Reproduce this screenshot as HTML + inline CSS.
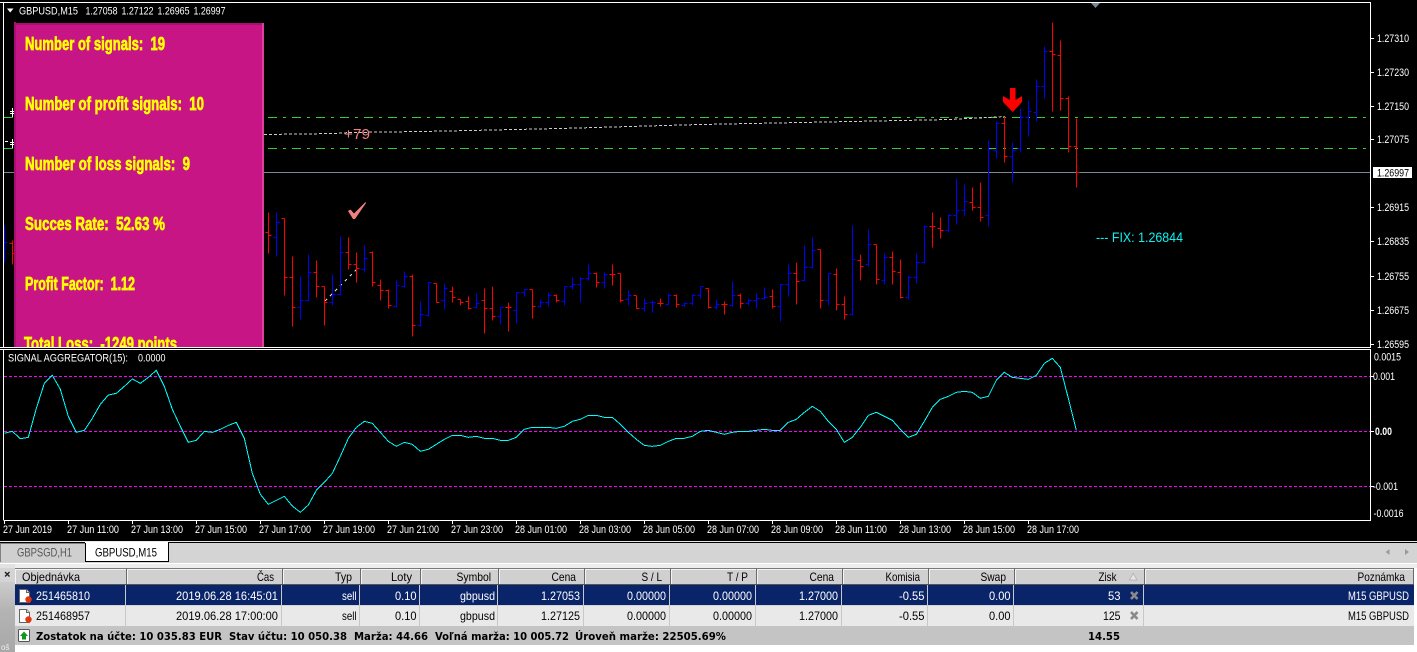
<!DOCTYPE html>
<html><head><meta charset="utf-8"><style>
html,body{margin:0;padding:0;background:#000;width:1417px;height:652px;overflow:hidden}
svg{display:block}
text{font-family:"Liberation Sans",sans-serif;white-space:pre}
.w text{fill:#fff;font-size:11px}
.y text{fill:#ff0;font-weight:bold;font-size:18px;stroke:#ff0;stroke-width:.7px}
.t text{fill:#000;font-size:12px}
.s text{fill:#fff;font-size:12px}
.b text{fill:#000;font-size:10.5px;font-weight:bold;font-family:"DejaVu Sans",sans-serif}
</style></head><body>
<svg width="1417" height="652" viewBox="0 0 1417 652" xmlns="http://www.w3.org/2000/svg">
<rect width="1417" height="652" fill="#000"/>

<!-- chart lines -->
<g shape-rendering="crispEdges" fill="none">
<path d="M4 117.5H1366M4 148.5H1366" stroke="#32cd32" stroke-dasharray="9 6 3 6"/>
<path d="M4 172.5H1370" stroke="#778899"/>
<polyline points="264,134.5 335,133.5 350,132.5 420,131.5 470,130.5 560,128.5 700,124.5 850,121.5 950,119.5 1005,116.5" stroke="#ccc" stroke-dasharray="3 2"/>
<polyline points="325,301 358,268" stroke="#ddd" stroke-dasharray="3 4"/>
<path d="M5 141.5H8M10 111.5H15M10 113.5H15M12.5 108V117M10 142.5H15M10 144.5H15M12.5 139V148" stroke="#fff"/>
<g transform="translate(.5,.5)">
<path stroke="#f00" d="M12 240V264M9 243h3M12 253h3
M268 212V253M265 232h3M268 235h3
M284 218V295M281 218h3M284 277h3
M292 256V326M289 277h3M292 307h3
M316 260V297M313 272h3M316 286h3
M324 286V325M321 286h3M324 302h3
M348 237V269M345 252h3M348 264h3
M356 252V282M353 264h3M356 268h3
M372 251V286M369 252h3M372 282h3
M380 279V300M377 285h3M380 290h3
M388 289V308M385 290h3M388 305h3
M412 274V336M409 276h3M412 325h3
M436 283V302M433 283h3M436 302h3
M452 286V302M449 291h3M452 297h3
M460 299V305M457 299h3M460 302h3
M468 296V309M465 301h3M468 308h3
M484 288V333M481 300h3M484 308h3
M492 286V320M489 308h3M492 316h3
M508 302V331M505 307h3M508 307h3
M532 289V318M529 289h3M532 306h3
M556 294V302M553 295h3M556 300h3
M596 272V287M593 273h3M596 282h3
M612 264V285M609 274h3M612 274h3
M620 273V302M617 273h3M620 300h3
M636 295V308M633 295h3M636 308h3
M660 298V306M657 303h3M660 303h3
M676 294V307M673 295h3M676 304h3
M708 288V308M705 288h3M708 307h3
M724 301V314M721 304h3M724 304h3
M740 293V308M737 295h3M740 303h3
M772 289V308M769 296h3M772 306h3
M796 262V304M793 273h3M796 281h3
M820 249V308M817 249h3M820 300h3
M836 268V310M833 274h3M836 304h3
M844 296V319M841 304h3M844 314h3
M860 254V280M857 260h3M860 266h3
M876 244V284M873 244h3M876 279h3
M892 251V284M889 257h3M892 271h3
M900 259V298M897 272h3M900 297h3
M932 212V247M929 226h3M932 226h3
M940 217V238M937 228h3M940 230h3
M972 187V210M969 202h3M972 207h3
M980 182V221M977 207h3M980 217h3
M1004 116V162M1001 123h3M1004 156h3
M1052 22V111M1049 51h3M1052 54h3
M1060 40V110M1057 55h3M1060 98h3
M1068 96V152M1065 98h3M1068 146h3
M1076 118V187M1073 146h3M1076 172h3"/>
<path stroke="#00f" d="M4 225V262M4 242h3
M276 212V256M273 237h3M276 222h3
M300 276V319M297 307h3M300 300h3
M308 254V301M305 300h3M308 272h3
M332 274V305M329 302h3M332 294h3
M340 236V295M337 294h3M340 252h3
M364 245V272M361 269h3M364 258h3
M396 280V307M393 306h3M396 285h3
M404 271V287M401 286h3M404 276h3
M420 301V326M417 325h3M420 314h3
M428 282V316M425 315h3M428 282h3
M444 283V309M441 300h3M444 288h3
M476 293V308M473 307h3M476 303h3
M500 307V324M497 316h3M500 307h3
M516 292V323M513 310h3M516 292h3
M524 289V296M521 292h3M524 289h3
M540 299V307M537 306h3M540 302h3
M548 292V306M545 302h3M548 295h3
M564 286V305M561 301h3M564 286h3
M572 277V289M569 286h3M572 284h3
M580 277V302M577 284h3M580 278h3
M588 264V280M585 278h3M588 273h3
M604 272V288M601 282h3M604 274h3
M628 290V305M625 299h3M628 295h3
M644 298V311M641 308h3M644 303h3
M652 300V312M649 302h3M652 302h3
M668 293V305M665 304h3M668 295h3
M684 302V306M681 305h3M684 303h3
M692 294V305M689 303h3M692 295h3
M700 286V298M697 295h3M700 286h3
M716 299V309M713 307h3M716 304h3
M732 281V306M729 305h3M732 295h3
M748 298V305M745 303h3M748 300h3
M756 293V308M753 300h3M756 298h3
M764 287V299M761 298h3M764 297h3
M780 284V321M777 306h3M780 284h3
M788 264V296M785 284h3M788 273h3
M804 245V281M801 280h3M804 267h3
M812 237V268M809 267h3M812 250h3
M828 273V305M825 300h3M828 273h3
M852 225V315M849 314h3M852 259h3
M868 229V266M865 264h3M868 244h3
M884 253V284M881 280h3M884 257h3
M908 275V299M905 297h3M908 277h3
M916 253V283M913 277h3M916 262h3
M924 225V263M921 262h3M924 226h3
M948 214V232M945 230h3M948 215h3
M956 178V224M953 215h3M956 210h3
M964 184V215M961 210h3M964 201h3
M988 140V226M985 215h3M988 149h3
M996 121V158M993 150h3M996 123h3
M1012 142V182M1009 156h3M1012 150h3
M1020 108V152M1017 148h3M1020 117h3
M1028 100V136M1025 117h3M1028 111h3
M1036 79V121M1033 112h3M1036 86h3
M1044 46V98M1041 86h3M1044 51h3"/>
</g>
</g>

<!-- chart overlays -->
<path d="M7 8.5H13.5L10.2 12.5Z" fill="#fff"/>
<path d="M1091 3H1100L1095.5 8Z" fill="#778899"/>
<path d="M1010 88H1015.5V100L1022 96V102L1012.7 112L1003 102V96L1010 100Z" fill="#f00"/>
<path d="M348 211L350.5 209.500L354 213.500L365.500 202L366 203L355 219H353Z" fill="#f08080"/>
<g class="w">
<text x="19" y="14.300" textLength="59" lengthAdjust="spacingAndGlyphs">GBPUSD,M15</text>
<text x="85.500" y="14.300" textLength="32" lengthAdjust="spacingAndGlyphs">1.27058</text>
<text x="121.500" y="14.300" textLength="32" lengthAdjust="spacingAndGlyphs">1.27122</text>
<text x="157.500" y="14.300" textLength="32" lengthAdjust="spacingAndGlyphs">1.26965</text>
<text x="193.500" y="14.300" textLength="32" lengthAdjust="spacingAndGlyphs">1.26997</text>
<text x="1377" y="42" textLength="32" lengthAdjust="spacingAndGlyphs">1.27310</text>
<text x="1377" y="76" textLength="32" lengthAdjust="spacingAndGlyphs">1.27230</text>
<text x="1377" y="110" textLength="32" lengthAdjust="spacingAndGlyphs">1.27150</text>
<text x="1377" y="143" textLength="32" lengthAdjust="spacingAndGlyphs">1.27075</text>
<text x="1377" y="211" textLength="32" lengthAdjust="spacingAndGlyphs">1.26915</text>
<text x="1377" y="245" textLength="32" lengthAdjust="spacingAndGlyphs">1.26835</text>
<text x="1377" y="280" textLength="32" lengthAdjust="spacingAndGlyphs">1.26755</text>
<text x="1377" y="314" textLength="32" lengthAdjust="spacingAndGlyphs">1.26675</text>
<text x="1377" y="348" textLength="32" lengthAdjust="spacingAndGlyphs">1.26595</text>
</g>
<rect x="1373" y="167" width="39" height="11" fill="#fff"/>
<text x="1377" y="176.500" font-size="11" fill="#000" textLength="32" lengthAdjust="spacingAndGlyphs">1.26997</text>
<text x="344" y="139" font-size="15" fill="#f08080" textLength="26" lengthAdjust="spacingAndGlyphs">+79</text>
<text x="1096" y="242" font-size="14" fill="#10f0f0" textLength="87" lengthAdjust="spacingAndGlyphs">--- FIX: 1.26844</text>

<!-- magenta panel -->
<rect x="14" y="23" width="250" height="325" fill="#c71585"/>
<rect x="14" y="23" width="250" height="2" fill="#a80f70"/>
<rect x="14" y="22" width="2" height="326" fill="#a80f70"/>
<rect x="262" y="23" width="2" height="325" fill="#de3f9e"/>
<g class="y">
<text x="25" y="50" textLength="140" lengthAdjust="spacingAndGlyphs">Number of signals:  19</text>
<text x="25" y="110" textLength="179" lengthAdjust="spacingAndGlyphs">Number of profit signals:  10</text>
<text x="25" y="170" textLength="165" lengthAdjust="spacingAndGlyphs">Number of loss signals:  9</text>
<text x="25" y="230" textLength="140" lengthAdjust="spacingAndGlyphs">Succes Rate:  52.63 %</text>
<text x="25" y="290" textLength="110" lengthAdjust="spacingAndGlyphs">Profit Factor:  1.12</text>
<text x="24" y="350" textLength="153" lengthAdjust="spacingAndGlyphs">Total Loss:  -1249 points</text>
</g>

<!-- indicator panel -->
<rect x="0" y="348" width="1372" height="172" fill="#000"/>
<g shape-rendering="crispEdges" fill="none">
<path d="M4 376.500H1370M4 431.500H1370M4 486.500H1370" stroke="#f0f" stroke-dasharray="3 2"/>
<polyline transform="translate(0,345) scale(.33333)" stroke="#0ff" stroke-width="3" points="13,265 37,259 61,281 85,277 109,190 133,115 157,91 181,133 205,214 229,262 253,256 277,220 301,178 325,150 349,145 373,124 397,102 421,115 445,97 469,76 493,124 517,193 541,244 565,292 589,286 613,259 637,262 661,253 685,241 709,232 733,280 757,385 781,448 805,478 829,466 853,454 877,483 901,502 925,480 949,436 973,412 997,385 1021,334 1045,280 1069,247 1093,229 1117,235 1141,262 1165,289 1189,304 1213,292 1237,298 1261,319 1285,313 1309,298 1333,283 1357,271 1381,271 1405,277 1429,274 1453,280 1477,280 1501,286 1525,286 1549,277 1573,253 1597,247 1621,247 1645,247 1669,250 1693,244 1717,229 1741,223 1765,211 1789,211 1813,217 1837,217 1861,238 1885,262 1909,283 1933,301 1957,304 1981,301 2005,289 2029,280 2053,280 2077,274 2101,259 2125,256 2149,262 2173,268 2197,262 2221,259 2245,259 2269,256 2293,253 2317,256 2341,256 2365,232 2389,223 2413,202 2437,184 2461,199 2485,229 2509,253 2533,292 2557,277 2581,247 2605,211 2629,202 2653,214 2677,226 2701,253 2725,277 2749,268 2773,229 2797,187 2821,163 2845,154 2869,142 2893,139 2917,142 2941,160 2965,154 2989,106 3013,82 3037,97 3061,100 3085,103 3109,91 3133,55 3157,40 3181,67 3205,160 3229,256"/>
<path stroke="#fff" d="M0 2.500H1371M3.500 2V347M1370.500 2V347M0 347.500H1371M0 349.500H1371M3.500 349V520M1370.500 349V520M3.500 520.500H1371
M1371 38.500h3M1371 72.500h3M1371 106.500h3M1371 139.500h3M1371 207.500h3M1371 241.500h3M1371 276.500h3M1371 310.500h3M1371 344.500h3
M1371 376.500h3M1371 431.500h3M1371 486.500h3
M4.500 521v3M68.500 521v3M132.500 521v3M196.500 521v3M260.500 521v3M324.500 521v3M388.500 521v3M452.500 521v3M516.500 521v3M580.500 521v3M644.500 521v3M708.500 521v3M772.500 521v3M836.500 521v3M900.500 521v3M964.500 521v3M1028.500 521v3"/>
</g>
<g class="w">
<text x="8" y="361.700" textLength="120" lengthAdjust="spacingAndGlyphs">SIGNAL AGGREGATOR(15):</text>
<text x="138" y="361.700" textLength="27.500" lengthAdjust="spacingAndGlyphs">0.0000</text>
<text x="1374" y="360.500" textLength="27" lengthAdjust="spacingAndGlyphs">0.0015</text>
<text x="1373" y="380" textLength="22" lengthAdjust="spacingAndGlyphs">0.001</text>
<text x="1375" y="435" textLength="17" font-weight="bold" lengthAdjust="spacingAndGlyphs">0.00</text>
<text x="1373" y="490" textLength="25" lengthAdjust="spacingAndGlyphs">-0.001</text>
<text x="1373.500" y="517" textLength="30" lengthAdjust="spacingAndGlyphs">-0.0016</text>
<text x="3" y="533" textLength="49" lengthAdjust="spacingAndGlyphs">27 Jun 2019</text>
<text x="67" y="533" textLength="52" lengthAdjust="spacingAndGlyphs">27 Jun 11:00</text>
<text x="131" y="533" textLength="52" lengthAdjust="spacingAndGlyphs">27 Jun 13:00</text>
<text x="195" y="533" textLength="52" lengthAdjust="spacingAndGlyphs">27 Jun 15:00</text>
<text x="259" y="533" textLength="52" lengthAdjust="spacingAndGlyphs">27 Jun 17:00</text>
<text x="323" y="533" textLength="52" lengthAdjust="spacingAndGlyphs">27 Jun 19:00</text>
<text x="387" y="533" textLength="52" lengthAdjust="spacingAndGlyphs">27 Jun 21:00</text>
<text x="451" y="533" textLength="52" lengthAdjust="spacingAndGlyphs">27 Jun 23:00</text>
<text x="515" y="533" textLength="52" lengthAdjust="spacingAndGlyphs">28 Jun 01:00</text>
<text x="579" y="533" textLength="52" lengthAdjust="spacingAndGlyphs">28 Jun 03:00</text>
<text x="643" y="533" textLength="52" lengthAdjust="spacingAndGlyphs">28 Jun 05:00</text>
<text x="707" y="533" textLength="52" lengthAdjust="spacingAndGlyphs">28 Jun 07:00</text>
<text x="771" y="533" textLength="52" lengthAdjust="spacingAndGlyphs">28 Jun 09:00</text>
<text x="835" y="533" textLength="52" lengthAdjust="spacingAndGlyphs">28 Jun 11:00</text>
<text x="899" y="533" textLength="52" lengthAdjust="spacingAndGlyphs">28 Jun 13:00</text>
<text x="963" y="533" textLength="52" lengthAdjust="spacingAndGlyphs">28 Jun 15:00</text>
<text x="1027" y="533" textLength="52" lengthAdjust="spacingAndGlyphs">28 Jun 17:00</text>
</g>

<!-- tabs -->
<g shape-rendering="crispEdges">
<rect x="0" y="541" width="1417" height="1" fill="#e8e8e8"/>
<rect x="0" y="542" width="1417" height="1" fill="#000"/>
<rect x="0" y="543" width="1417" height="20" fill="#d4d4d4"/>
<rect x="0" y="543" width="85" height="19" fill="#cfcfcf"/>
<rect x="0" y="543" width="85" height="1" fill="#808080"/>
<rect x="0" y="543" width="1" height="19" fill="#808080"/>
<rect x="85" y="542" width="83" height="20" fill="#fff"/>
<rect x="85" y="561" width="84" height="1" fill="#000"/>
<rect x="168" y="543" width="1" height="19" fill="#000"/>
<rect x="85" y="543" width="1" height="19" fill="#000"/>
<rect x="0" y="563" width="1417" height="1" fill="#fff"/>
<rect x="0" y="564" width="1417" height="88" fill="#fff"/>
<rect x="0" y="564" width="15" height="4" fill="#e2e2e2"/>
<rect x="15" y="564" width="1402" height="4" fill="#ededed"/>
</g>
<defs><linearGradient id="lc" x1="0" x2="0" y1="0" y2="1"><stop offset="0" stop-color="#d8d8d8"/><stop offset=".5" stop-color="#b4b4b4"/><stop offset="1" stop-color="#a8a8a8"/></linearGradient></defs>
<rect x="0" y="568" width="15" height="84" fill="url(#lc)"/>
<rect x="0" y="568" width="15" height="14" fill="#d4d4d4"/>
<path d="M5 572L9.500 576.500M9.500 572L5 576.500" stroke="#222" stroke-width="1.400"/>
<text x="17" y="556.500" font-size="12" fill="#555" textLength="55" lengthAdjust="spacingAndGlyphs">GBPSGD,H1</text>
<text x="95" y="556.500" font-size="12" fill="#000" textLength="62" lengthAdjust="spacingAndGlyphs">GBPUSD,M15</text>
<path d="M1389.500 549V555L1385.700 552ZM1405 549V555L1409 552Z" fill="#9a9a9a"/>

<!-- table -->
<g shape-rendering="crispEdges">
<rect x="15" y="568" width="1399" height="17" fill="#d0d0d0"/>
<rect x="15" y="585" width="1399" height="20" fill="#0a246a"/>
<rect x="15" y="605" width="1399" height="1" fill="#d4d4d4"/>
<rect x="15" y="606" width="1399" height="20" fill="#e9e9e9"/>
<rect x="15" y="626" width="1399" height="19" fill="#c4c4c4"/>
<rect x="15" y="568" width="1399" height="1" fill="#7a7a7a"/>
<rect x="15" y="569" width="1399" height="1" fill="#f4f4f4"/>
<rect x="15" y="584" width="1399" height="1" fill="#555"/>
<path fill="none" stroke="#6a6a6a" d="M126.500 568V584M282.500 568V584M360.500 568V584M420.500 568V584M498.500 568V584M584.500 568V584M670.500 568V584M756.500 568V584M842.500 568V584M928.500 568V584M1014.500 568V584M1144.500 568V584M1413.500 568V584"/>
<path fill="none" stroke="#f4f4f4" d="M15.500 569V584M127.500 569V584M283.500 569V584M361.500 569V584M421.500 569V584M499.500 569V584M585.500 569V584M671.500 569V584M757.500 569V584M843.500 569V584M929.500 569V584M1015.500 569V584M1145.500 569V584"/>
<path fill="none" stroke="#c8c8c8" d="M125.500 585V626M281.500 585V626M359.500 585V626M419.500 585V626M497.500 585V626M583.500 585V626M669.500 585V626M755.500 585V626M841.500 585V626M927.500 585V626M1013.500 585V626M1143.500 585V626"/>
</g>
<g class="t">
<text x="22" y="581" textLength="58" lengthAdjust="spacingAndGlyphs">Objednávka</text>
<text x="257" y="581" textLength="17" lengthAdjust="spacingAndGlyphs">Čas</text>
<text x="335" y="581" textLength="17" lengthAdjust="spacingAndGlyphs">Typ</text>
<text x="391" y="581" textLength="21" lengthAdjust="spacingAndGlyphs">Loty</text>
<text x="456.500" y="581" textLength="34.500" lengthAdjust="spacingAndGlyphs">Symbol</text>
<text x="551.500" y="581" textLength="24.500" lengthAdjust="spacingAndGlyphs">Cena</text>
<text x="641.500" y="581" textLength="20.500" lengthAdjust="spacingAndGlyphs">S / L</text>
<text x="727" y="581" textLength="21" lengthAdjust="spacingAndGlyphs">T / P</text>
<text x="809.500" y="581" textLength="24.500" lengthAdjust="spacingAndGlyphs">Cena</text>
<text x="885.500" y="581" textLength="34.500" lengthAdjust="spacingAndGlyphs">Komisia</text>
<text x="980.500" y="581" textLength="25.500" lengthAdjust="spacingAndGlyphs">Swap</text>
<text x="1098.500" y="581" textLength="18" lengthAdjust="spacingAndGlyphs">Zisk</text>
<text x="1357.500" y="581" textLength="47.500" lengthAdjust="spacingAndGlyphs">Poznámka</text>
<text x="36" y="620" textLength="54" lengthAdjust="spacingAndGlyphs">251468957</text>
<text x="176" y="620" textLength="102" lengthAdjust="spacingAndGlyphs">2019.06.28 17:00:00</text>
<text x="342" y="620" textLength="14.500" lengthAdjust="spacingAndGlyphs">sell</text>
<text x="395" y="620" textLength="21.500" lengthAdjust="spacingAndGlyphs">0.10</text>
<text x="460" y="620" textLength="35" lengthAdjust="spacingAndGlyphs">gbpusd</text>
<text x="541" y="620" textLength="39" lengthAdjust="spacingAndGlyphs">1.27125</text>
<text x="627" y="620" textLength="39" lengthAdjust="spacingAndGlyphs">0.00000</text>
<text x="713" y="620" textLength="39" lengthAdjust="spacingAndGlyphs">0.00000</text>
<text x="799" y="620" textLength="39" lengthAdjust="spacingAndGlyphs">1.27000</text>
<text x="899" y="620" textLength="25.500" lengthAdjust="spacingAndGlyphs">-0.55</text>
<text x="989" y="620" textLength="21.500" lengthAdjust="spacingAndGlyphs">0.00</text>
<text x="1103" y="620" textLength="17.500" lengthAdjust="spacingAndGlyphs">125</text>
<text x="1348" y="620" textLength="61" lengthAdjust="spacingAndGlyphs">M15 GBPUSD</text>
</g>
<g class="s">
<text x="36" y="600" textLength="54" lengthAdjust="spacingAndGlyphs">251465810</text>
<text x="176" y="600" textLength="102" lengthAdjust="spacingAndGlyphs">2019.06.28 16:45:01</text>
<text x="342" y="600" textLength="14.500" lengthAdjust="spacingAndGlyphs">sell</text>
<text x="395" y="600" textLength="21.500" lengthAdjust="spacingAndGlyphs">0.10</text>
<text x="460" y="600" textLength="35" lengthAdjust="spacingAndGlyphs">gbpusd</text>
<text x="541" y="600" textLength="39" lengthAdjust="spacingAndGlyphs">1.27053</text>
<text x="627" y="600" textLength="39" lengthAdjust="spacingAndGlyphs">0.00000</text>
<text x="713" y="600" textLength="39" lengthAdjust="spacingAndGlyphs">0.00000</text>
<text x="799" y="600" textLength="39" lengthAdjust="spacingAndGlyphs">1.27000</text>
<text x="899" y="600" textLength="25.500" lengthAdjust="spacingAndGlyphs">-0.55</text>
<text x="989" y="600" textLength="21.500" lengthAdjust="spacingAndGlyphs">0.00</text>
<text x="1108" y="600" textLength="12.500" lengthAdjust="spacingAndGlyphs">53</text>
<text x="1348" y="600" textLength="61" lengthAdjust="spacingAndGlyphs">M15 GBPUSD</text>
</g>
<g class="b">
<text x="36" y="640" textLength="186" lengthAdjust="spacingAndGlyphs">Zostatok na účte: 10 035.83 EUR</text>
<text x="229" y="640" textLength="118" lengthAdjust="spacingAndGlyphs">Stav účtu: 10 050.38</text>
<text x="354" y="640" textLength="74" lengthAdjust="spacingAndGlyphs">Marža: 44.66</text>
<text x="435" y="640" textLength="134" lengthAdjust="spacingAndGlyphs">Voľná marža: 10 005.72</text>
<text x="575" y="640" textLength="151" lengthAdjust="spacingAndGlyphs">Úroveň marže: 22505.69%</text>
<text x="1088" y="640" textLength="32" lengthAdjust="spacingAndGlyphs">14.55</text>
</g>
<!-- sort triangle -->
<path d="M1129.500 580H1137L1133.200 573.500Z" fill="#e6e6e6" stroke="#aaa" stroke-width=".7"/>
<!-- close icons -->
<path d="M1131 592L1137.500 599M1137.500 592L1131 599M1131 612L1137.500 619M1137.500 612L1131 619" stroke="#8a8a8a" stroke-width="2.600"/>
<!-- doc icons -->
<g>
<path d="M19.500 589.500H26.500L29.500 592.500V602.500H19.500Z" fill="#fff" stroke="#666"/>
<path d="M26.500 589.500V592.500H29.500" fill="#ddd" stroke="#666"/>
<circle cx="28.500" cy="599.500" r="3.200" fill="#e8340c"/>
<path d="M19.500 609.500H26.500L29.500 612.500V622.500H19.500Z" fill="#fff" stroke="#666"/>
<path d="M26.500 609.500V612.500H29.500" fill="#ddd" stroke="#666"/>
<circle cx="28.500" cy="619.500" r="3.200" fill="#e8340c"/>
</g>
<!-- up arrow icon -->
<rect x="18.500" y="629.500" width="11" height="12" rx="1" fill="#fff" stroke="#555"/>
<path d="M24 631.500L28 636H26V639.500H22V636H20Z" fill="#0a9a20"/>
<text x="1" y="650" font-size="8" fill="#eee">oš</text>
</svg>
</body></html>
